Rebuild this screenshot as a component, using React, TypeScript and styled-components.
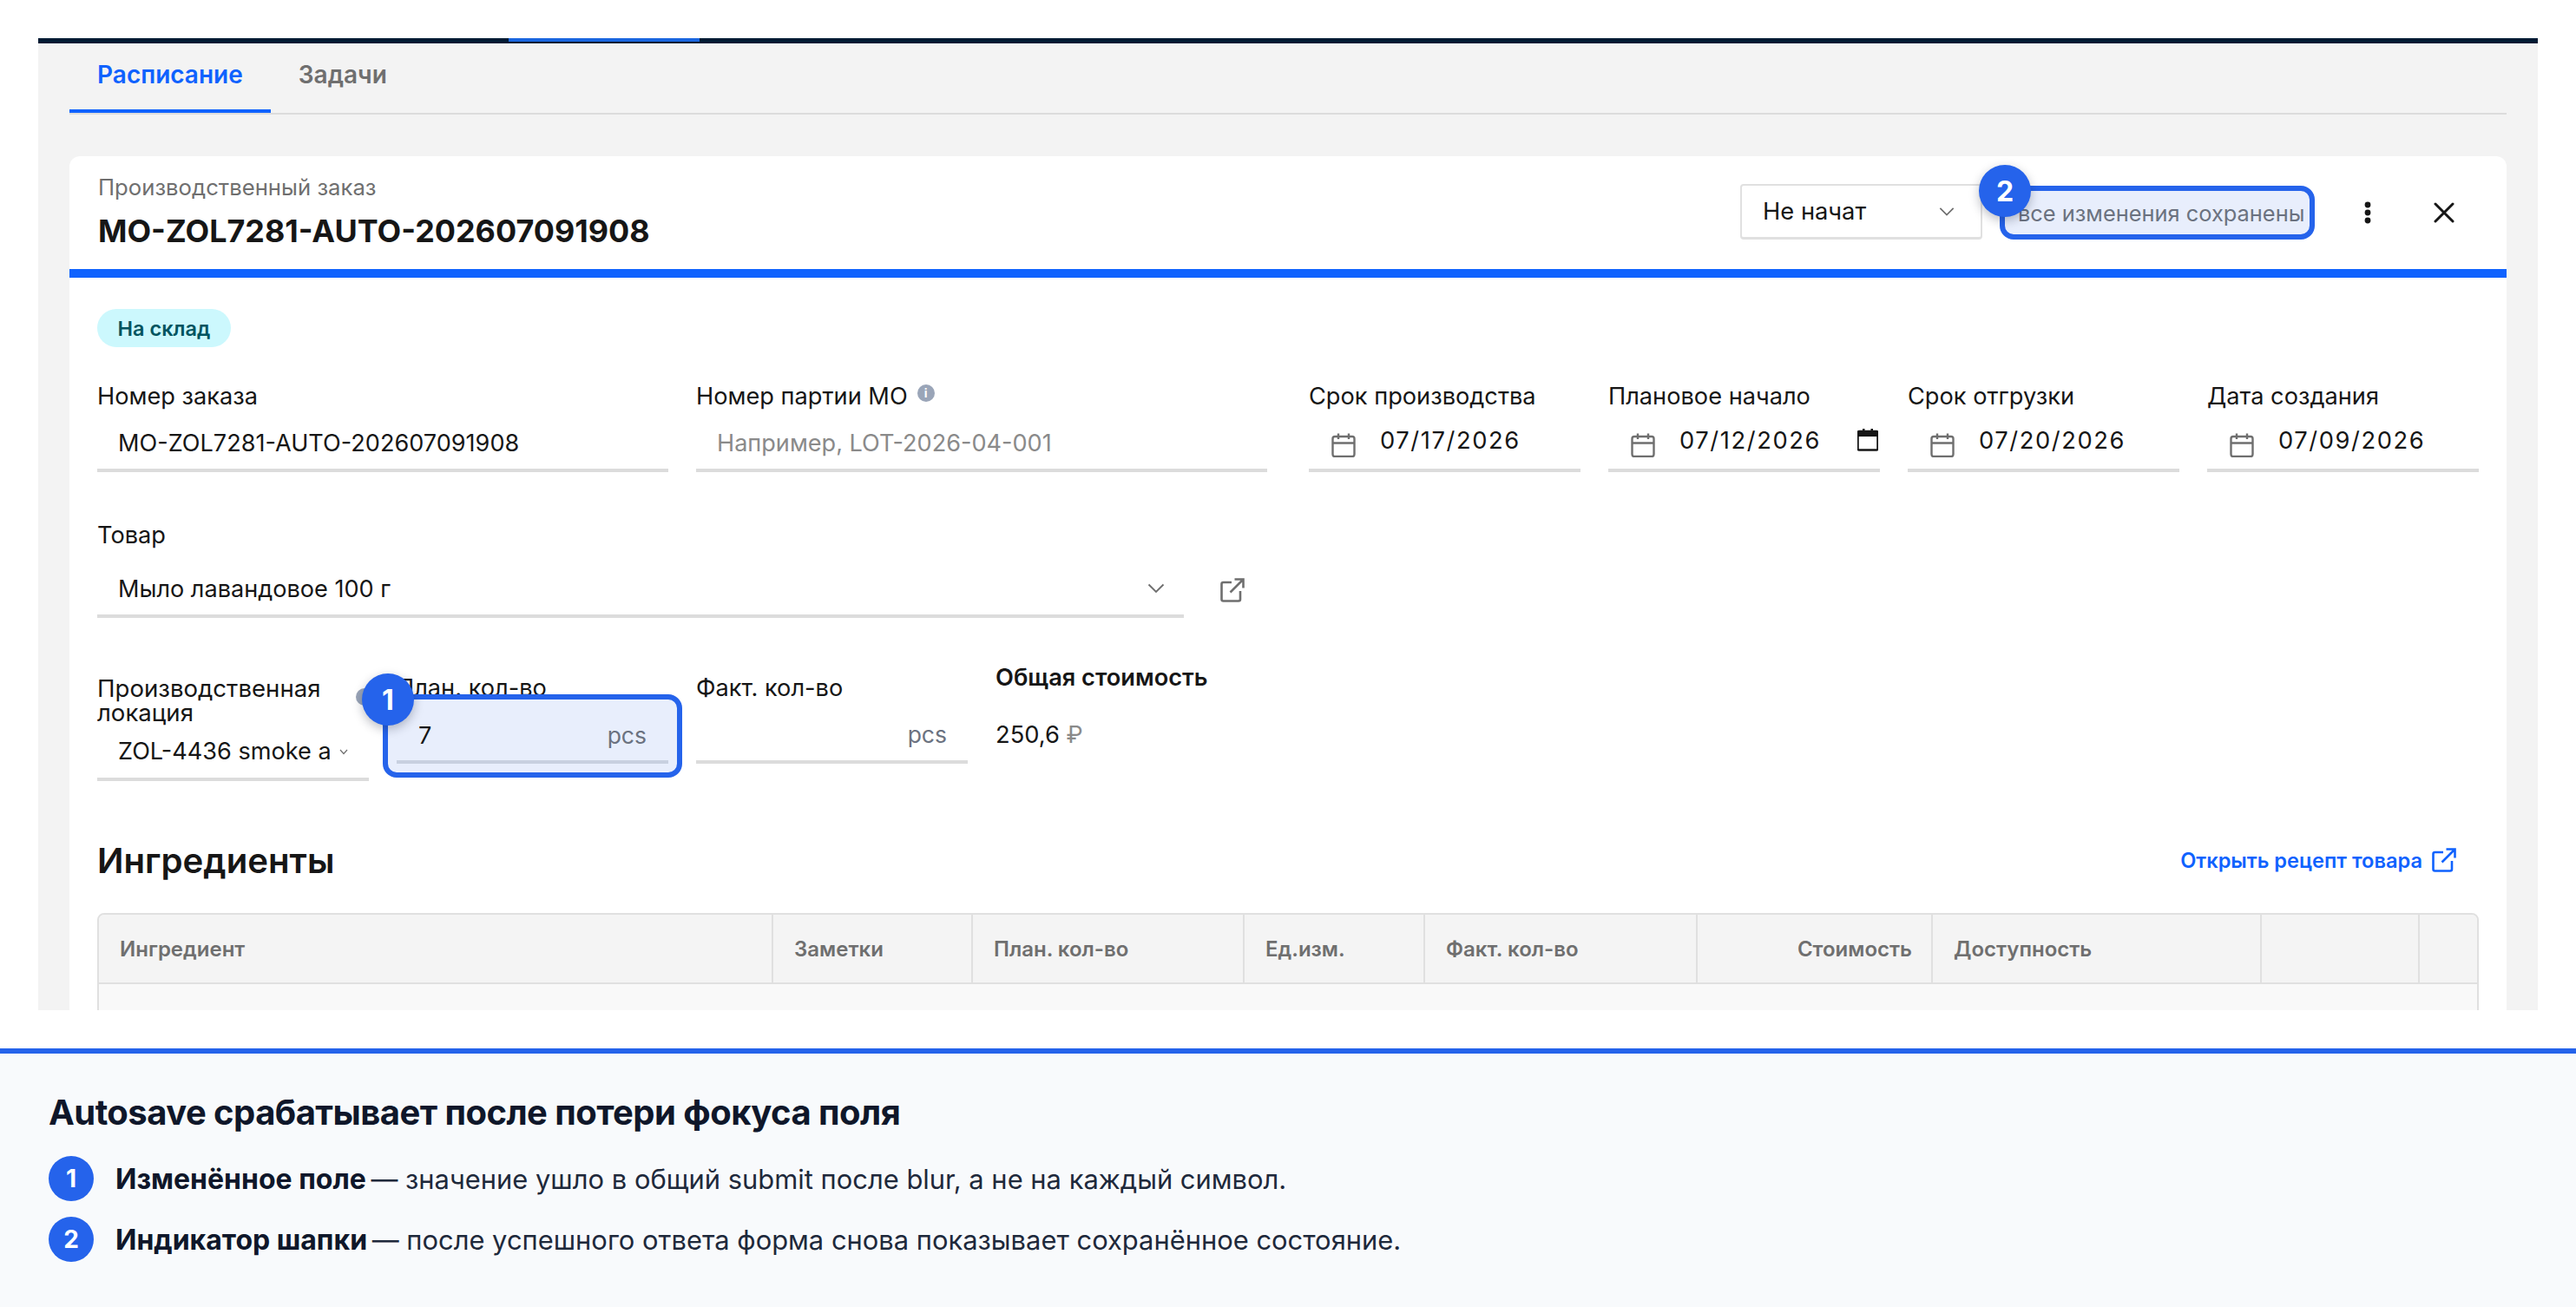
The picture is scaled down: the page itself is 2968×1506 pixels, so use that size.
import React from "react";
import styled, { createGlobalStyle } from "styled-components";

const Global = createGlobalStyle`
  html, body { margin: 0; padding: 0; background: #fff; }
  body { font-family: Inter, "Noto Sans", "Liberation Sans", sans-serif; color: #161616; }
  * { box-sizing: border-box; }
`;

const Page = styled.div`
  width: 2968px;
  height: 1506px;
  display: flex;
  flex-direction: column;
  overflow: hidden;
  background: #fff;
`;
const Shot = styled.div`
  height: 1164px;
  padding: 44px 44px 0;
  flex: none;
`;
const Frame = styled.div`
  height: 1120px;
  overflow: hidden;
  background: #f3f3f3;
  padding: 0 36px;
`;
const TopBar = styled.div`
  height: 6px;
  margin: 0 -36px;
  background: #001a33;
  position: relative;
`;
const TopAccent = styled.div`
  position: absolute;
  left: 542px;
  top: 0;
  width: 220px;
  height: 4px;
  background: #1a66e0;
`;
const Tabs = styled.div`
  display: flex;
  height: 82px;
  border-bottom: 2px solid #dcdcdc;
`;
const Tab = styled.div<{ $active?: boolean }>`
  height: 80px;
  padding: 0 32px 4px;
  display: flex;
  align-items: center;
  font-size: 28px;
  font-weight: 600;
  color: ${(p) => (p.$active ? "#0f62fe" : "#6f6f6f")};
  border-bottom: 4px solid ${(p) => (p.$active ? "#0f62fe" : "transparent")};
`;
const Card = styled.div`
  margin-top: 48px;
  background: #fff;
  border-radius: 12px 12px 0 0;
  height: 1000px;
`;
const CardHeader = styled.div`
  height: 140px;
  border-bottom: 10px solid #0f62fe;
  padding: 20px 40px 0 33px;
  display: flex;
  align-items: flex-start;
  justify-content: space-between;
`;
const HeaderText = styled.div`
  display: flex;
  flex-direction: column;
`;
const Eyebrow = styled.div`
  font-size: 25.7px;
  line-height: 32px;
  color: #6f6f6f;
`;
const OrderTitle = styled.div`
  margin-top: 13px;
  font-size: 35.9px;
  line-height: 42px;
  font-weight: 700;
  color: #161616;
`;
const HeaderActions = styled.div`
  display: flex;
  align-items: center;
  height: 90px;
`;
const StatusSelect = styled.div`
  width: 279px;
  height: 64px;
  margin-top: -2px;
  border: 2px solid #e0e0e0;
  border-bottom-width: 3px;
  border-radius: 4px;
  padding: 0 30px 0 24px;
  display: flex;
  align-items: center;
  justify-content: space-between;
  font-size: 27.3px;
`;
const SavedBox = styled.div`
  position: relative;
  width: 363px;
  height: 62px;
  margin-left: 20px;
  border: 6px solid #2563eb;
  border-radius: 16px;
  background: #e8eefc;
  padding: 0 0 0 15px;
  display: flex;
  align-items: center;
  font-size: 25.4px;
  white-space: nowrap;
  color: #6b7280;
`;
const IconButton = styled.div<{ $gap: number }>`
  width: 64px;
  height: 64px;
  display: flex;
  align-items: center;
  justify-content: center;
  margin-left: ${(p) => p.$gap}px;
`;
const Marker = styled.div<{ $size?: number }>`
  width: ${(p) => p.$size ?? 60}px;
  height: ${(p) => p.$size ?? 60}px;
  border-radius: 50%;
  background: #2563eb;
  color: #fff;
  display: flex;
  align-items: center;
  justify-content: center;
  font-size: ${(p) => (p.$size ? 28 : 32)}px;
  font-weight: 700;
  flex: none;
`;
const FloatingMarker = styled(Marker)`
  position: absolute;
  z-index: 3;
  box-shadow: 0 4px 12px rgba(15, 23, 42, 0.28);
`;
const MarkerOnSaved = styled(FloatingMarker)`
  left: -30px;
  top: -30px;
`;
const MarkerOnQty = styled(FloatingMarker)`
  left: -30px;
  top: -30px;
`;
const CardBody = styled.div`
  padding: 36px 32px 0;
`;
const Badge = styled.div`
  width: 154px;
  height: 44px;
  border-radius: 22px;
  background: #ccf8fd;
  color: #00545f;
  display: flex;
  align-items: center;
  justify-content: center;
  font-size: 23.5px;
  font-weight: 600;
`;
const TopRow = styled.div`
  margin-top: 43px;
  display: grid;
  grid-template-columns: 1348px 1348px;
  column-gap: 48px;
`;
const TwoCols = styled.div`
  display: grid;
  grid-template-columns: repeat(2, 1fr);
  column-gap: 32px;
`;
const FourCols = styled.div`
  display: grid;
  grid-template-columns: repeat(4, 313px);
  column-gap: 32px;
  align-items: start;
`;
const Field = styled.div`
  position: relative;
  min-width: 0;
`;
const Label = styled.div<{ $gap?: number }>`
  font-size: 27.2px;
  line-height: 28px;
  height: 28px;
  margin-bottom: ${(p) => p.$gap ?? 9}px;
  color: #161616;
  display: flex;
  align-items: center;
  white-space: nowrap;
`;
const TwoLineLabel = styled.div`
  position: relative;
  font-size: 27.6px;
  line-height: 28px;
  height: 57px;
  color: #161616;
`;
const Info = styled.span`
  width: 20px;
  height: 20px;
  border-radius: 50%;
  background: #9aa5b8;
  color: #fff;
  font-size: 14px;
  font-weight: 700;
  line-height: 20px;
  text-align: center;
  margin-left: 11px;
  margin-top: -8px;
`;
const LocationInfo = styled(Info)`
  position: absolute;
  left: 298px;
  top: 14px;
  margin: 0;
`;
const Input = styled.div<{ $muted?: boolean }>`
  height: 64px;
  border-bottom: 4px solid #dcdcdc;
  padding: 0 24px;
  display: flex;
  align-items: center;
  justify-content: space-between;
  font-size: 27.1px;
  color: ${(p) => (p.$muted ? "#8a8a8a" : "#161616")};
  white-space: nowrap;
`;
const ClippedValue = styled.span`
  width: 244px;
  margin-top: -2px;
  overflow: hidden;
`;
const SmallChevron = styled.svg`
  margin-left: 8px;
  flex: none;
`;
const DateInput = styled.div`
  height: 64px;
  border-bottom: 4px solid #dcdcdc;
  padding: 0 24px 0 26px;
  display: flex;
  align-items: center;
  font-size: 27.3px;
  letter-spacing: 1.6px;
  color: #161616;
`;
const DateText = styled.span`
  margin-left: 28px;
  margin-top: -6px;
  flex: 1;
`;
const CalIcon = styled.svg`
  flex: none;
  margin-top: 6px;
`;
const PickerIcon = styled.svg`
  flex: none;
  margin-top: -6px;
  margin-right: -22px;
`;
const ProductRow = styled.div`
  margin-top: 59px;
`;
const ProductLine = styled.div`
  display: flex;
  align-items: center;
`;
const ProductInput = styled(Input)`
  width: 1252px;
  padding-right: 22px;
`;
const LaunchSlot = styled.span`
  display: flex;
  margin-left: 42px;
  flex: none;
`;
const QtyRow = styled.div`
  margin-top: 67px;
`;
const QtyHighlight = styled.div`
  position: absolute;
  left: -16px;
  right: -16px;
  top: 21px;
  height: 96px;
  border: 6px solid #2563eb;
  border-radius: 16px;
  background: #e8eefc;
  padding: 16px 10px 0;
  z-index: 2;
`;
const QtyInner = styled(Input)`
  height: 58px;
  border-bottom-color: #c8d0e0;
  padding: 0 25px 4px;
`;
const Unit = styled.span`
  color: #6b7280;
  font-size: 26.5px;
`;
const FactUnit = styled(Unit)`
  margin-left: auto;
`;
const TotalField = styled(Field)`
  margin-top: -12px;
`;
const TotalLabel = styled.div`
  font-size: 27.2px;
  line-height: 28px;
  font-weight: 600;
  margin-bottom: 32px;
  white-space: nowrap;
`;
const TotalValue = styled.div`
  font-size: 27.3px;
  line-height: 40px;
`;
const Ruble = styled.span`
  color: #8a8a8a;
`;
const SectionHead = styled.div`
  margin-top: 67px;
  height: 48px;
  display: flex;
  align-items: center;
  justify-content: space-between;
  padding-right: 26px;
`;
const SectionTitle = styled.div`
  font-size: 40.2px;
  font-weight: 600;
  color: #161616;
`;
const RecipeLink = styled.div`
  display: flex;
  align-items: center;
  gap: 11px;
  color: #0f62fe;
  font-size: 23.6px;
  font-weight: 600;
`;
const Table = styled.div`
  margin-top: 37px;
  border: 2px solid #e0e0e0;
  border-radius: 8px 8px 0 0;
  background: #f9f9f9;
  height: 300px;
`;
const HeaderRow = styled.div`
  display: grid;
  grid-template-columns: 777px 230px 313px 208px 314px 271px 379px 182px 1fr;
  height: 80px;
  background: #f4f4f4;
  border-bottom: 2px solid #e0e0e0;
  border-radius: 6px 6px 0 0;
`;
const HeadCell = styled.div<{ $right?: boolean }>`
  display: flex;
  align-items: center;
  justify-content: ${(p) => (p.$right ? "flex-end" : "flex-start")};
  padding: 0 ${(p) => (p.$right ? 22 : 24)}px 0 24px;
  font-size: 24px;
  font-weight: 600;
  color: #6f6f6f;
  border-right: 2px solid #e0e0e0;
  &:last-child { border-right: none; }
`;
const Legend = styled.div`
  margin-top: 44px;
  flex: 1;
  border-top: 6px solid #2563eb;
  background: #f8fafc;
  padding: 40px 56px 0;
`;
const LegendTitle = styled.div`
  font-size: 40px;
  line-height: 56px;
  letter-spacing: -0.55px;
  font-weight: 700;
  color: #0f172a;
  margin-bottom: 22px;
`;
const LegendItem = styled.div`
  display: flex;
  align-items: center;
  gap: 25px;
  height: 52px;
  margin-bottom: 18px;
  font-size: 30.9px;
  color: #1e293b;
`;
const Strong = styled.strong`
  font-size: 32px;
  font-weight: 700;
  color: #0f172a;
  margin-right: -3px;
`;

const Chevron = ({ size = 20, color = "#6f6f6f", w = 1.6 }: { size?: number; color?: string; w?: number }) => (
  <svg width={size} height={size} viewBox="0 0 20 20" fill="none" style={{ flex: "none" }}>
    <path d="M1.5 5.5 L10 14 L18.5 5.5" stroke={color} strokeWidth={w * 1.2} />
  </svg>
);

const Calendar = () => (
  <CalIcon width="28" height="28" viewBox="0 0 28 28" fill="none" stroke="#6f6f6f" strokeWidth="2.4">
    <rect x="1.5" y="4" width="25" height="23" rx="2.5" />
    <path d="M1.5 11.5H26.5M8 0.5V7M20 0.5V7" />
  </CalIcon>
);

const Launch = ({ color, size, stroke }: { color: string; size: number; stroke: number }) => (
  <svg width={size} height={size} viewBox="0 0 28 28" fill="none" stroke={color} strokeWidth={stroke} style={{ flex: "none" }}>
    <path d="M13 5H3.5A2 2 0 0 0 1.5 7V24.5A2 2 0 0 0 3.5 26.5H21A2 2 0 0 0 23 24.5V15" />
    <path d="M11.5 16.5L26 2M16.5 1.5H26.5V11.5" />
  </svg>
);

const columns = ["Ингредиент", "Заметки", "План. кол-во", "Ед.изм.", "Факт. кол-во", "Стоимость", "Доступность", "", ""];

export default function App() {
  return (
    <Page>
      <Global />
      <Shot>
        <Frame>
          <TopBar>
            <TopAccent />
          </TopBar>
          <Tabs>
            <Tab $active>Расписание</Tab>
            <Tab>Задачи</Tab>
          </Tabs>
          <Card>
            <CardHeader>
              <HeaderText>
                <Eyebrow>Производственный заказ</Eyebrow>
                <OrderTitle>MO-ZOL7281-AUTO-202607091908</OrderTitle>
              </HeaderText>
              <HeaderActions>
                <StatusSelect>
                  Не начат
                  <Chevron size={18} />
                </StatusSelect>
                <SavedBox>
                  <MarkerOnSaved>2</MarkerOnSaved>
                  все изменения сохранены
                </SavedBox>
                <IconButton $gap={29}>
                  <svg width="8" height="26" viewBox="0 0 8 26" fill="#161616">
                    <circle cx="4" cy="4" r="3.4" />
                    <circle cx="4" cy="13" r="3.4" />
                    <circle cx="4" cy="22" r="3.4" />
                  </svg>
                </IconButton>
                <IconButton $gap={24}>
                  <svg width="24" height="24" viewBox="0 0 24 24" fill="none" stroke="#161616" strokeWidth="3" strokeLinecap="round">
                    <path d="M2 2L22 22M22 2L2 22" />
                  </svg>
                </IconButton>
              </HeaderActions>
            </CardHeader>
            <CardBody>
              <Badge>На склад</Badge>
              <TopRow>
                <TwoCols>
                  <Field>
                    <Label>Номер заказа</Label>
                    <Input>MO-ZOL7281-AUTO-202607091908</Input>
                  </Field>
                  <Field>
                    <Label>
                      Номер партии МО<Info>i</Info>
                    </Label>
                    <Input $muted>Например, LOT-2026-04-001</Input>
                  </Field>
                </TwoCols>
                <FourCols>
                  <Field>
                    <Label>Срок производства</Label>
                    <DateInput>
                      <Calendar />
                      <DateText>07/17/2026</DateText>
                    </DateInput>
                  </Field>
                  <Field>
                    <Label>Плановое начало</Label>
                    <DateInput>
                      <Calendar />
                      <DateText>07/12/2026</DateText>
                      <PickerIcon width="24" height="26" viewBox="0 0 24 26" fill="none">
                        <path d="M2 3h20a1.5 1.5 0 0 1 1.5 1.5V23a1.5 1.5 0 0 1-1.5 1.5H2A1.5 1.5 0 0 1 .5 23V4.5A1.5 1.5 0 0 1 2 3z" stroke="#161616" strokeWidth="2.5" />
                        <path d="M1 3h22v6H1zM6 0h2.500v4H6zM15.500 0H18v4h-2.500z" fill="#161616" />
                      </PickerIcon>
                    </DateInput>
                  </Field>
                  <Field>
                    <Label>Срок отгрузки</Label>
                    <DateInput>
                      <Calendar />
                      <DateText>07/20/2026</DateText>
                    </DateInput>
                  </Field>
                  <Field>
                    <Label>Дата создания</Label>
                    <DateInput>
                      <Calendar />
                      <DateText>07/09/2026</DateText>
                    </DateInput>
                  </Field>
                </FourCols>
              </TopRow>
              <ProductRow>
                <Label $gap={17}>Товар</Label>
                <ProductLine>
                  <ProductInput>
                    Мыло лавандовое 100 г
                    <Chevron size={20} />
                  </ProductInput>
                  <LaunchSlot>
                    <Launch color="#6f6f6f" size={28} stroke={2.6} />
                  </LaunchSlot>
                </ProductLine>
              </ProductRow>
              <QtyRow>
                <FourCols>
                  <Field>
                    <TwoLineLabel>
                      Производственная
                      <br />
                      локация
                      <LocationInfo>i</LocationInfo>
                    </TwoLineLabel>
                    <Input>
                      <ClippedValue>ZOL-4436 smoke area</ClippedValue>
                      <SmallChevron width="10" height="7" viewBox="0 0 10 7" fill="none">
                        <path d="M1 1L5 5.500L9 1" stroke="#6f6f6f" strokeWidth="1.2" />
                      </SmallChevron>
                    </Input>
                  </Field>
                  <Field>
                    <Label>План. кол-во</Label>
                    <QtyHighlight>
                      <MarkerOnQty>1</MarkerOnQty>
                      <QtyInner>
                        7<Unit>pcs</Unit>
                      </QtyInner>
                    </QtyHighlight>
                  </Field>
                  <Field>
                    <Label>Факт. кол-во</Label>
                    <Input>
                      <FactUnit>pcs</FactUnit>
                    </Input>
                  </Field>
                  <TotalField>
                    <TotalLabel>Общая стоимость</TotalLabel>
                    <TotalValue>
                      250,6 <Ruble>₽</Ruble>
                    </TotalValue>
                  </TotalField>
                </FourCols>
              </QtyRow>
              <SectionHead>
                <SectionTitle>Ингредиенты</SectionTitle>
                <RecipeLink>
                  Открыть рецепт товара
                  <Launch color="#0f62fe" size={28} stroke={2.6} />
                </RecipeLink>
              </SectionHead>
              <Table>
                <HeaderRow>
                  {columns.map((c, i) => (
                    <HeadCell key={i} $right={c === "Стоимость"}>
                      {c}
                    </HeadCell>
                  ))}
                </HeaderRow>
              </Table>
            </CardBody>
          </Card>
        </Frame>
      </Shot>
      <Legend>
        <LegendTitle>Autosave срабатывает после потери фокуса поля</LegendTitle>
        <LegendItem>
          <Marker $size={52}>1</Marker>
          <span>
            <Strong>Изменённое поле</Strong> — значение ушло в общий submit после blur, а не на каждый символ.
          </span>
        </LegendItem>
        <LegendItem>
          <Marker $size={52}>2</Marker>
          <span>
            <Strong>Индикатор шапки</Strong> — после успешного ответа форма снова показывает сохранённое состояние.
          </span>
        </LegendItem>
      </Legend>
    </Page>
  );
}
